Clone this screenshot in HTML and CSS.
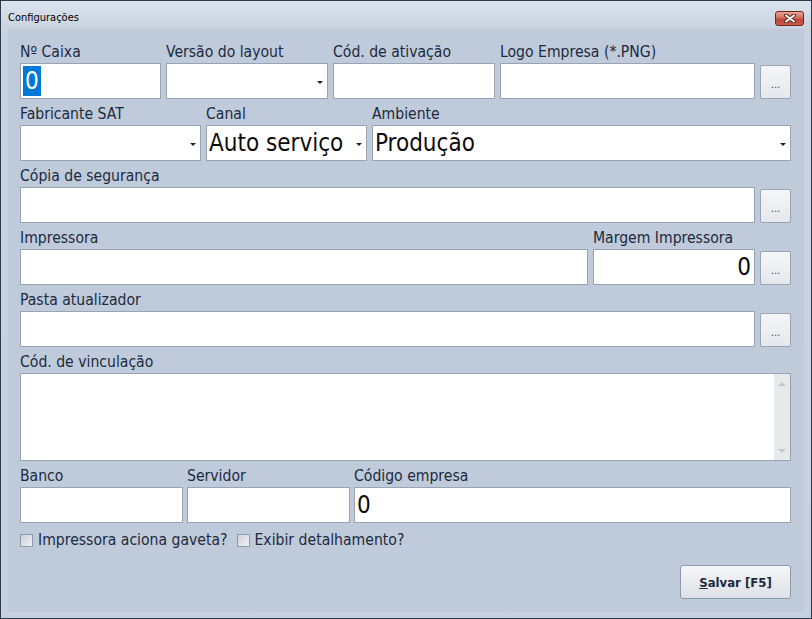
FILE: index.html
```html
<!DOCTYPE html>
<html lang="pt-BR">

<head>
    <meta charset="UTF-8">
    <meta name="viewport" content="width=device-width, initial-scale=1.0">
    <title>Configurações</title>
    <link rel="stylesheet" href="styles.css">
</head>

<body>
    <div class="window">
        <div class="titlebar">
            <span class="title">Configurações</span>
            <div class="close_btn">
                <svg width="14" height="9" viewBox="0 0 14 9">
                    <path d="M3 1.5 L11 7.5 M11 1.5 L3 7.5" stroke="#5a2a26" stroke-width="4" stroke-linecap="round" />
                    <path d="M3 1.5 L11 7.5 M11 1.5 L3 7.5" stroke="#ffffff" stroke-width="2" stroke-linecap="round" />
                </svg>
            </div>
        </div>
        <div class="client">
            <!-- linha 1 -->
            <div class="row">
                <div class="field w141">
                    <label>Nº Caixa</label>
                    <div class="edit big"><span class="selected">0</span></div>
                </div>
                <div class="field w162">
                    <label>Versão do layout</label>
                    <div class="edit combo"><span></span><i class="arrow"></i></div>
                </div>
                <div class="field w162">
                    <label>Cód. de ativação</label>
                    <div class="edit"></div>
                </div>
                <div class="field grow">
                    <label>Logo Empresa (*.PNG)</label>
                    <div class="edit"></div>
                </div>
                <div class="dots_btn">...</div>
            </div>
            <!-- linha 2 -->
            <div class="row">
                <div class="field w181">
                    <label>Fabricante SAT</label>
                    <div class="edit combo"><span></span><i class="arrow"></i></div>
                </div>
                <div class="field w161">
                    <label>Canal</label>
                    <div class="edit combo big"><span>Auto serviço</span><i class="arrow"></i></div>
                </div>
                <div class="field grow">
                    <label>Ambiente</label>
                    <div class="edit combo big"><span>Produção</span><i class="arrow"></i></div>
                </div>
            </div>
            <!-- linha 3 -->
            <div class="row">
                <div class="field grow">
                    <label>Cópia de segurança</label>
                    <div class="edit"></div>
                </div>
                <div class="dots_btn">...</div>
            </div>
            <!-- linha 4 -->
            <div class="row">
                <div class="field grow">
                    <label>Impressora</label>
                    <div class="edit"></div>
                </div>
                <div class="field w162">
                    <label>Margem Impressora</label>
                    <div class="edit big right">0</div>
                </div>
                <div class="dots_btn">...</div>
            </div>
            <!-- linha 5 -->
            <div class="row">
                <div class="field grow">
                    <label>Pasta atualizador</label>
                    <div class="edit"></div>
                </div>
                <div class="dots_btn">...</div>
            </div>
            <!-- linha 6 -->
            <div class="row">
                <div class="field grow">
                    <label>Cód. de vinculação</label>
                    <div class="memo">
                        <div class="memo_text"></div>
                        <div class="scrollbar">
                            <i class="sb_up"></i>
                            <i class="sb_down"></i>
                        </div>
                    </div>
                </div>
            </div>
            <!-- linha 7 -->
            <div class="row tight">
                <div class="field w163">
                    <label>Banco</label>
                    <div class="edit"></div>
                </div>
                <div class="field w163">
                    <label>Servidor</label>
                    <div class="edit"></div>
                </div>
                <div class="field grow">
                    <label>Código empresa</label>
                    <div class="edit big">0</div>
                </div>
            </div>
            <div class="checks">
                <div class="check"><span class="box"></span>Impressora aciona gaveta?</div>
                <div class="check"><span class="box"></span>Exibir detalhamento?</div>
            </div>
            <div class="footer">
                <div class="save_btn"><u>S</u>alvar [F5]</div>
            </div>
        </div>
    </div>
</body>

</html>
```

FILE: styles.css
```css
* {
    margin: 0px;
    padding: 0px;
    box-sizing: border-box;
}

body {
    background-color: #c8d2df;
    font-family: "DejaVu Sans Condensed", "DejaVu Sans", sans-serif;
}

.window {
    display: flex;
    flex-direction: column;
    width: 812px;
    height: 619px;
    border: 1px solid #2e3b4e;
    background: linear-gradient(to bottom, #dbe3ed 0px, #c9d3e0 28px, #c6d0de 100%);
}

.titlebar {
    display: flex;
    justify-content: space-between;
    height: 28px;
    padding: 0 7px 0 7px;
}

.title {
    margin-top: 10px;
    font-size: 11px;
    line-height: 14px;
    color: #000;
}

.close_btn {
    display: flex;
    align-items: center;
    justify-content: center;
    width: 29px;
    height: 15px;
    margin-top: 10px;
    border: 1px solid #6d2620;
    border-radius: 3px;
    background: linear-gradient(to bottom, #e6a596 0%, #d36f5f 45%, #c2473a 55%, #c9594a 100%);
}

.client {
    flex: 1;
    margin: 0 7px 7px 7px;
    padding: 16px 13px 0 12px;
    background-color: #bfcadb;
}

.row {
    display: flex;
    align-items: flex-end;
    gap: 5px;
    margin-bottom: 8px;
}

.row.tight {
    gap: 4px;
}

.field {
    display: flex;
    flex-direction: column;
}

.field label {
    height: 18px;
    font-size: 15.6px;
    line-height: 14px;
    color: #1c2a3d;
    white-space: nowrap;
}

.w141 { width: 141px; }
.w161 { width: 161px; }
.w162 { width: 162px; }
.w163 { width: 163px; }
.w181 { width: 181px; }
.grow { flex: 1; }

.edit {
    display: flex;
    align-items: center;
    height: 36px;
    padding: 0 2px;
    border: 1px solid #98a3b4;
    background-color: #fff;
    color: #0d0d0d;
    overflow: hidden;
    white-space: nowrap;
}

.edit.big {
    font-size: 24px;
}

.edit.right {
    justify-content: flex-end;
    padding-right: 3px;
}

.edit .selected {
    padding: 0 2px;
    line-height: 30px;
    background-color: #0078d7;
    color: #fff;
}

.combo span {
    flex: 1;
}

.combo .arrow {
    width: 0;
    height: 0;
    margin: 2px 2px 0 0;
    border-left: 3px solid transparent;
    border-right: 3px solid transparent;
    border-top: 3px solid #222;
}

.dots_btn {
    display: flex;
    align-items: center;
    justify-content: center;
    width: 31px;
    height: 34px;
    padding-top: 4px;
    border: 1px solid #9aa4b3;
    border-radius: 2px;
    background: linear-gradient(to bottom, #f5f6f8 0%, #e4e7ec 100%);
    font-size: 11px;
    color: #3b4a60;
}

.memo {
    display: flex;
    height: 88px;
    border: 1px solid #98a3b4;
    background-color: #fff;
}

.memo_text {
    flex: 1;
}

.scrollbar {
    display: flex;
    flex-direction: column;
    justify-content: space-between;
    align-items: center;
    width: 16px;
    padding: 8px 0 7px 0;
    background-color: #e8e9eb;
}

.sb_up,
.sb_down {
    width: 0;
    height: 0;
    border-left: 4px solid transparent;
    border-right: 4px solid transparent;
}

.sb_up {
    border-bottom: 4px solid #c7c8cc;
}

.sb_down {
    border-top: 4px solid #c7c8cc;
}

.checks {
    display: flex;
    gap: 9px;
    height: 18px;
    margin-top: 8px;
}

.check {
    display: flex;
    align-items: center;
    gap: 5px;
    font-size: 15.6px;
    line-height: 18px;
    color: #1c2a3d;
    white-space: nowrap;
}

.check .box {
    width: 13px;
    height: 13px;
    border: 1px solid #8f9aab;
    background: linear-gradient(135deg, #cdd2da 0%, #eef0f3 100%);
}

.footer {
    display: flex;
    justify-content: flex-end;
    margin-top: 16px;
}

.save_btn {
    display: flex;
    align-items: center;
    justify-content: center;
    width: 111px;
    height: 34px;
    border: 1px solid #8d98a9;
    border-radius: 3px;
    background: linear-gradient(to bottom, #f6f7f9 0%, #e9ebef 50%, #dde1e7 100%);
    font-size: 13px;
    font-weight: bold;
    color: #1c2a3d;
}
```
